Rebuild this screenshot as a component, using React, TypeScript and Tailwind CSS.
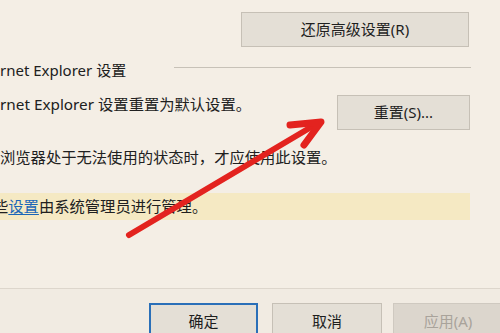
import React from 'react';

const font = 'font-["Noto_Sans","Noto_Sans_CJK_SC",sans-serif]';

// Windows-style push button used across the dialog
const DialogButton: React.FC<{ label: string; className?: string; disabled?: boolean; primary?: boolean }> = ({
  label,
  className = '',
  disabled,
  primary,
}) => (
  <button
    disabled={disabled}
    className={`flex items-center justify-center text-[15px] leading-none ${
      disabled
        ? 'bg-[#dcd6cd] border border-[#cfc9c0] text-[#a9a39b]'
        : primary
          ? 'bg-[#e4dfd6] border-2 border-[#2a6fb8] text-[#1e1e1e]'
          : 'bg-[#e4dfd6] border border-[#c6c0b6] text-[#1e1e1e]'
    } ${className}`}
  >
    {label}
  </button>
);

export default function App() {
  return (
    <div className={`relative w-[500px] h-[333px] overflow-hidden bg-[#f4eee5] text-[#202020] ${font}`}>
      {/* Advanced settings restore */}
      <div className="flex justify-end pr-[31px] pt-[12px]">
        <DialogButton label="还原高级设置(R)" className="w-[228px] h-[35px]" />
      </div>

      {/* Group title with rule */}
      <div className="flex items-center h-[20px] mt-[13px] pr-[29px]">
        <span className="text-[15px] leading-[20px] whitespace-nowrap">rnet Explorer 设置</span>
        <div className="ml-auto w-[297px] h-px bg-[#c7c1b7] -mt-[6px]" />
      </div>

      {/* Reset row */}
      <div className="flex items-start mt-[15px] pr-[30px]">
        <span className="text-[15.3px] leading-[18px] whitespace-nowrap">rnet Explorer 设置重置为默认设置。</span>
        <DialogButton label="重置(S)..." className="ml-auto w-[133px] h-[35px]" />
      </div>

      <p className="mt-[17px] text-[15.3px] leading-[20px] whitespace-nowrap">
        浏览器处于无法使用的状态时，才应使用此设置。
      </p>

      {/* Managed settings notice */}
      <div className="mt-[26px] w-[470px] h-[27px] bg-[#f5e9c3] flex items-center overflow-hidden">
        <span className="-ml-[7px] text-[15.3px] leading-none whitespace-nowrap">
          些<span className="text-[#1a66b8] underline underline-offset-2">设置</span>由系统管理员进行管理。
        </span>
      </div>

      {/* Footer buttons */}
      <div className="absolute left-0 right-0 top-[288px] bottom-0 border-t border-[#ddd6cc] bg-[#f1ebe2]">
        <div className="flex pl-[149px] pt-[14px] gap-[14px]">
          <DialogButton label="确定" primary className="w-[109px] h-[36px] shrink-0" />
          <DialogButton label="取消" className="w-[110px] h-[36px] shrink-0" />
          <DialogButton label="应用(A)" disabled className="w-[110px] h-[36px] shrink-0 -ml-[3px]" />
        </div>
      </div>

      {/* Red annotation arrow drawn over the dialog */}
      <svg className="absolute inset-0 pointer-events-none" width="500" height="333" viewBox="0 0 500 333">
        <g stroke="#e3231f" strokeLinecap="round" strokeLinejoin="round" fill="none">
          <line x1="129" y1="235" x2="318" y2="123" strokeWidth="6" />
          <polyline points="290,125 321,122 304,145" strokeWidth="7" />
        </g>
      </svg>
    </div>
  );
}
